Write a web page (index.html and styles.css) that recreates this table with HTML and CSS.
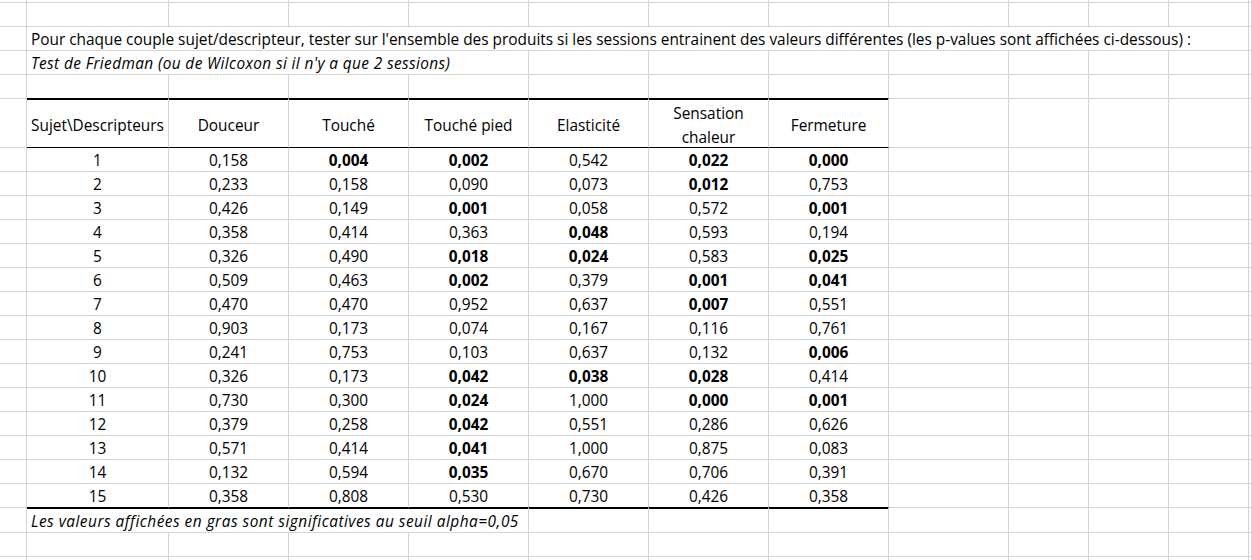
FILE: index.html
```html
<!DOCTYPE html>
<html lang="fr">
<head>
<meta charset="utf-8">
<title>Tests de Friedman</title>
<link rel="stylesheet" href="styles.css">
</head>
<body>
<div class="sheet">
  <!-- row 1 (partial) -->
  <div></div><div></div><div></div><div></div><div></div><div></div><div></div><div></div><div></div><div></div><div></div><div></div><div></div>
  <!-- row 2 (empty) -->
  <div></div><div></div><div></div><div></div><div></div><div></div><div></div><div></div><div></div><div></div><div></div><div></div><div></div>
  <!-- row 3 -->
  <div></div>
  <div class="txt span11">Pour chaque couple sujet/descripteur, tester sur l'ensemble des produits si les sessions entrainent des valeurs différentes (les p-values sont affichées ci-dessous) :</div>
  <div></div>
  <!-- row 4 -->
  <div></div>
  <div class="txt it span4">Test de Friedman (ou de Wilcoxon si il n'y a que 2 sessions)</div>
  <div></div><div></div><div></div><div></div><div></div><div></div><div></div><div></div>
  <!-- row 5 -->
  <div></div>
  <div class="above"></div><div class="above"></div><div class="above"></div><div class="above"></div><div class="above"></div><div class="above"></div><div class="above"></div>
  <div></div><div></div><div></div><div></div><div></div>
  <!-- header -->
  <div></div>
  <div class="hd left">Sujet\Descripteurs</div>
  <div class="hd">Douceur</div>
  <div class="hd">Touché</div>
  <div class="hd">Touché pied</div>
  <div class="hd">Elasticité</div>
  <div class="hd">Sensation<br>chaleur</div>
  <div class="hd">Fermeture</div>
  <div></div><div></div><div></div><div></div><div></div>
  <!-- 1 -->
  <div></div>
  <div class="n">1</div><div class="n">0,158</div><div class="n b">0,004</div><div class="n b">0,002</div><div class="n">0,542</div><div class="n b">0,022</div><div class="n b">0,000</div>
  <div></div><div></div><div></div><div></div><div></div>
  <!-- 2 -->
  <div></div>
  <div class="n">2</div><div class="n">0,233</div><div class="n">0,158</div><div class="n">0,090</div><div class="n">0,073</div><div class="n b">0,012</div><div class="n">0,753</div>
  <div></div><div></div><div></div><div></div><div></div>
  <!-- 3 -->
  <div></div>
  <div class="n">3</div><div class="n">0,426</div><div class="n">0,149</div><div class="n b">0,001</div><div class="n">0,058</div><div class="n">0,572</div><div class="n b">0,001</div>
  <div></div><div></div><div></div><div></div><div></div>
  <!-- 4 -->
  <div></div>
  <div class="n">4</div><div class="n">0,358</div><div class="n">0,414</div><div class="n">0,363</div><div class="n b">0,048</div><div class="n">0,593</div><div class="n">0,194</div>
  <div></div><div></div><div></div><div></div><div></div>
  <!-- 5 -->
  <div></div>
  <div class="n">5</div><div class="n">0,326</div><div class="n">0,490</div><div class="n b">0,018</div><div class="n b">0,024</div><div class="n">0,583</div><div class="n b">0,025</div>
  <div></div><div></div><div></div><div></div><div></div>
  <!-- 6 -->
  <div></div>
  <div class="n">6</div><div class="n">0,509</div><div class="n">0,463</div><div class="n b">0,002</div><div class="n">0,379</div><div class="n b">0,001</div><div class="n b">0,041</div>
  <div></div><div></div><div></div><div></div><div></div>
  <!-- 7 -->
  <div></div>
  <div class="n">7</div><div class="n">0,470</div><div class="n">0,470</div><div class="n">0,952</div><div class="n">0,637</div><div class="n b">0,007</div><div class="n">0,551</div>
  <div></div><div></div><div></div><div></div><div></div>
  <!-- 8 -->
  <div></div>
  <div class="n">8</div><div class="n">0,903</div><div class="n">0,173</div><div class="n">0,074</div><div class="n">0,167</div><div class="n">0,116</div><div class="n">0,761</div>
  <div></div><div></div><div></div><div></div><div></div>
  <!-- 9 -->
  <div></div>
  <div class="n">9</div><div class="n">0,241</div><div class="n">0,753</div><div class="n">0,103</div><div class="n">0,637</div><div class="n">0,132</div><div class="n b">0,006</div>
  <div></div><div></div><div></div><div></div><div></div>
  <!-- 10 -->
  <div></div>
  <div class="n">10</div><div class="n">0,326</div><div class="n">0,173</div><div class="n b">0,042</div><div class="n b">0,038</div><div class="n b">0,028</div><div class="n">0,414</div>
  <div></div><div></div><div></div><div></div><div></div>
  <!-- 11 -->
  <div></div>
  <div class="n">11</div><div class="n">0,730</div><div class="n">0,300</div><div class="n b">0,024</div><div class="n">1,000</div><div class="n b">0,000</div><div class="n b">0,001</div>
  <div></div><div></div><div></div><div></div><div></div>
  <!-- 12 -->
  <div></div>
  <div class="n">12</div><div class="n">0,379</div><div class="n">0,258</div><div class="n b">0,042</div><div class="n">0,551</div><div class="n">0,286</div><div class="n">0,626</div>
  <div></div><div></div><div></div><div></div><div></div>
  <!-- 13 -->
  <div></div>
  <div class="n">13</div><div class="n">0,571</div><div class="n">0,414</div><div class="n b">0,041</div><div class="n">1,000</div><div class="n">0,875</div><div class="n">0,083</div>
  <div></div><div></div><div></div><div></div><div></div>
  <!-- 14 -->
  <div></div>
  <div class="n">14</div><div class="n">0,132</div><div class="n">0,594</div><div class="n b">0,035</div><div class="n">0,670</div><div class="n">0,706</div><div class="n">0,391</div>
  <div></div><div></div><div></div><div></div><div></div>
  <!-- 15 -->
  <div></div>
  <div class="n last">15</div><div class="n last">0,358</div><div class="n last">0,808</div><div class="n last">0,530</div><div class="n last">0,730</div><div class="n last">0,426</div><div class="n last">0,358</div>
  <div></div><div></div><div></div><div></div><div></div>
  <!-- footnote -->
  <div></div>
  <div class="txt it note span4 below">Les valeurs affichées en gras sont significatives au seuil alpha=0,05</div>
  <div class="below"></div><div class="below"></div><div class="below"></div>
  <div></div><div></div><div></div><div></div><div></div>
  <!-- empty rows -->
  <div></div><div></div><div></div><div></div><div></div><div></div><div></div><div></div><div></div><div></div><div></div><div></div><div></div>
  <div></div><div></div><div></div><div></div><div></div><div></div><div></div><div></div><div></div><div></div><div></div><div></div><div></div>
</div>
</body>
</html>
```

FILE: styles.css
```css
html, body {
  margin: 0;
  padding: 0;
  background: #ffffff;
}

body {
  width: 1252px;
  height: 560px;
  overflow: hidden;
  font-family: "Open Sans", Lato, sans-serif;
  font-size: 15.4px;
  color: #000000;
}

.sheet {
  display: grid;
  grid-template-columns: 27px 142px repeat(7, 120px) repeat(3, 80px) 1fr;
  grid-template-rows: 3px repeat(4, 24px) 49px repeat(15, 24px) 25px 24px 24px;
  width: 1252px;
}

.sheet > div {
  box-sizing: border-box;
  border-right: 1px solid #d4d4d4;
  border-bottom: 1px solid #d4d4d4;
  min-width: 0;
  white-space: nowrap;
  line-height: 20px;
}

.sheet > .txt {
  display: flex;
  align-items: flex-end;
  padding: 0 0 0 4px;
}

.sheet > .it {
  font-style: italic;
  letter-spacing: 0.38px;
}

.sheet > .note {
  letter-spacing: 0.5px;
}

.span11 {
  grid-column: span 11;
}

.span4 {
  grid-column: span 4;
}

.sheet > .above {
  border-bottom-color: #000000;
}

.sheet > .hd {
  display: flex;
  flex-direction: column;
  align-items: center;
  justify-content: center;
  text-align: center;
  line-height: 24px;
  padding-top: 6px;
  white-space: normal;
  border-bottom-color: #000000;
  box-shadow: inset 0 1px 0 #000000;
}

.sheet > .hd.left {
  align-items: flex-start;
  padding-left: 4px;
}

.sheet > .n {
  display: flex;
  align-items: flex-end;
  justify-content: center;
}

.sheet > .b {
  font-weight: bold;
}

.sheet > .last {
  border-bottom-color: #000000;
}

.sheet > .below {
  box-shadow: inset 0 1px 0 #000000;
}
```
